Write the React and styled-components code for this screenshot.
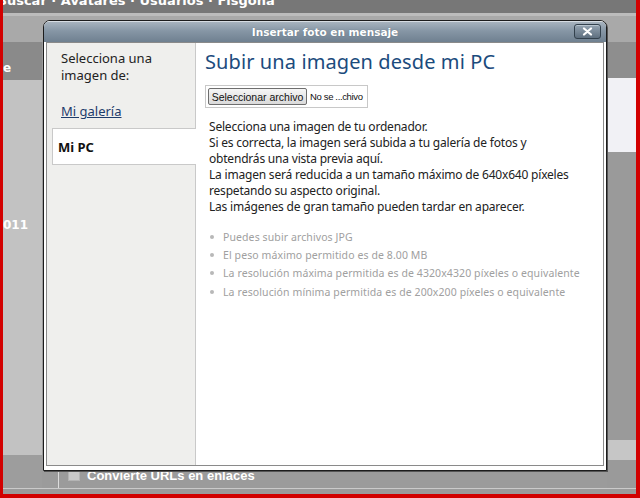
import React from "react";
import styled, { createGlobalStyle } from "styled-components";

const Global = createGlobalStyle`
  html, body { margin: 0; padding: 0; width: 640px; height: 498px; overflow: hidden; }
  * { box-sizing: border-box; }
`;

const Frame = styled.div`
  position: relative;
  width: 640px;
  height: 498px;
  border-left: 3px solid #d20000;
  border-right: 4px solid #d20000;
  border-bottom: 4px solid #d20000;
  background: #9b9b9b;
  display: flex;
  flex-direction: column;
  overflow: hidden;
  font-family: "Noto Sans", "DejaVu Sans", sans-serif;
`;

const TopNav = styled.div`
  height: 13px;
  background: #777;
  color: #fff;
  font: bold 13px "DejaVu Sans", sans-serif;
  line-height: 13px;
  overflow: hidden;
  white-space: nowrap;
  span { display: block; margin-top: -6px; margin-left: -6px; }
`;

const Band = styled.div`
  height: ${(p) => p.$h}px;
  background: ${(p) => p.$bg};
`;

const Content = styled.div`
  display: grid;
  grid-template-columns: 39px 1fr 29px;
  height: 446px;
`;

const Column = styled.div`
  display: flex;
  flex-direction: column;
`;

const Block = styled.div`
  height: ${(p) => (p.$h ? `${p.$h}px` : "auto")};
  flex: ${(p) => (p.$h ? "none" : "1")};
  background: ${(p) => p.$bg};
  color: #fff;
  font: bold 12px "DejaVu Sans", sans-serif;
  padding-top: ${(p) => p.$pt || 0}px;
  overflow: hidden;
  white-space: nowrap;
`;

const Spacer = styled.div`
  flex: 1;
`;

const OptionRow = styled.div`
  height: 33px;
  margin-left: 16px;
  border-left: 1px solid #dcdcdc;
  display: flex;
  align-items: flex-start;
  gap: 7px;
  padding: 13px 0 0 9px;
  color: #fff;
  font: bold 13px "Liberation Sans", sans-serif;
`;

const FakeCheck = styled.span`
  width: 12px;
  height: 12px;
  background: #c8c8c8;
  border: 1px solid #b4b4b4;
  margin-top: 1px;
`;

const BottomLine = styled.div`
  height: 1px;
  background: #cacaca;
`;

/* Modal */
const Modal = styled.div`
  position: absolute;
  left: 40px;
  top: 20px;
  width: 564px;
  height: 451px;
  border: 1px solid #1c1c1c;
  border-radius: 7px 7px 0 0;
  background: #fff;
  display: flex;
  flex-direction: column;
  overflow: hidden;
  box-shadow: 1px 1px 0 #555;
`;

const TitleBar = styled.div`
  position: relative;
  height: 21px;
  flex: none;
  background: linear-gradient(#a7b3be 0%, #8696a5 45%, #6f8090 100%);
  border-top: 1px solid #d7dde3;
  color: #fff;
  font: bold 10.5px "DejaVu Sans", sans-serif;
  display: flex;
  align-items: center;
  justify-content: center;
  text-shadow: 0 0 1px #5a6a78;
`;

const CloseButton = styled.button`
  position: absolute;
  right: 5px;
  top: 2px;
  width: 27px;
  height: 15px;
  padding: 0;
  border: 1px solid #33414d;
  border-radius: 3px;
  background: linear-gradient(#95a4b2, #5e6f7f);
  box-shadow: inset 0 1px 0 #b8c4ce;
  display: flex;
  align-items: center;
  justify-content: center;
`;

const BodyWrap = styled.div`
  flex: 1;
  padding: 0 2px 4px 2px;
  display: flex;
`;

const Body = styled.div`
  flex: 1;
  border: 1px solid #8a8a8a;
  display: flex;
`;

const Sidebar = styled.div`
  width: 149px;
  flex: none;
  background: #efefed;
  border-right: 1px solid #c9c9c9;
  padding-top: 7px;
  display: flex;
  flex-direction: column;
`;

const SideTitle = styled.div`
  padding-left: 14px;
  font-size: 13px;
  line-height: 17px;
  color: #222;
`;

const SideLink = styled.a`
  margin: 19px 0 0 14px;
  font-size: 13px;
  line-height: 17px;
  color: #1e3c6c;
  text-decoration: underline;
  cursor: pointer;
`;

const Tab = styled.div`
  margin: 8px -1px 0 5px;
  height: 37px;
  background: #fff;
  border: 1px solid #c9c9c9;
  border-right: none;
  display: flex;
  align-items: center;
  padding-left: 5px;
  font-size: 13px;
  font-weight: bold;
  color: #111;
`;

const Main = styled.div`
  flex: 1;
  background: #fff;
  padding: 7px 0 0 9px;
`;

const Heading = styled.h1`
  margin: 0;
  font-size: 20px;
  line-height: 24px;
  font-weight: normal;
  color: #1b4b7d;
  letter-spacing: 0.1px;
`;

const FileBox = styled.div`
  margin-top: 11px;
  width: 163px;
  height: 23px;
  border: 1px solid #c8c8c8;
  display: flex;
  align-items: center;
  gap: 3px;
  padding-left: 2px;
  font: 9.5px "Liberation Sans", sans-serif;
  letter-spacing: -0.35px;
  color: #111;
  white-space: nowrap;
`;

const FileButton = styled.button`
  flex: none;
  width: 99px;
  height: 17px;
  padding: 0;
  border: 1px solid #6e6e6e;
  border-radius: 2px;
  background: linear-gradient(#f6f6f6, #dadada);
  font: 10.5px "Liberation Sans", sans-serif;
  letter-spacing: 0;
  color: #111;
  line-height: 14px;
  white-space: nowrap;
`;

const Paragraph = styled.p`
  margin: 11px 0 0 4px;
  font-size: 12px;
  line-height: 16px;
  letter-spacing: -0.2px;
  color: #222;
`;

const Rules = styled.ul`
  margin: 13px 0 0 5px;
  padding: 0;
  list-style: none;
`;

const Rule = styled.li`
  display: flex;
  align-items: center;
  gap: 9px;
  height: 18.2px;
  font-size: 10.5px;
  letter-spacing: 0.1px;
  color: #a0a0a0;
  &::before {
    content: "";
    width: 4px;
    height: 4px;
    border-radius: 50%;
    background: #b8b8b8;
  }
`;

const rules = [
  "Puedes subir archivos JPG",
  "El peso máximo permitido es de 8.00 MB",
  "La resolución máxima permitida es de 4320x4320 píxeles o equivalente",
  "La resolución mínima permitida es de 200x200 píxeles o equivalente",
];

export default function App() {
  return (
    <>
      <Global />
      <Frame>
        <TopNav>
          <span>Buscar · Avatares · Usuarios · Fisgona</span>
        </TopNav>
        <Band $h={3} $bg="#bcbcbc" />
        <Band $h={26} $bg="#a9a9a9" />
        <Content>
          <Column>
            <Block $h={38} $bg="#8a8a8a" $pt={19}>e</Block>
            <Block $h={375} $bg="#c2c2c2" $pt={138}>011</Block>
            <Block $bg="#9d9d9d" />
          </Column>
          <Column>
            <Spacer />
            <OptionRow>
              <FakeCheck />
              Convierte URLs en enlaces
            </OptionRow>
          </Column>
          <Column>
            <Block $h={36} $bg="#8e8e8e" />
            <Block $h={74} $bg="#f1f1f5" />
            <Block $h={288} $bg="#9a9a9a" />
            <Block $h={20} $bg="#c6c6c6" />
            <Block $bg="#9a9a9a" />
          </Column>
        </Content>
        <BottomLine />

        <Modal>
          <TitleBar>
            Insertar foto en mensaje
            <CloseButton aria-label="Cerrar">
              <svg width="11" height="9" viewBox="0 0 11 9">
                <path d="M2 1.5 L9 7.5 M9 1.5 L2 7.5" stroke="#fff" strokeWidth="2.2" strokeLinecap="round" />
              </svg>
            </CloseButton>
          </TitleBar>
          <BodyWrap>
            <Body>
              <Sidebar>
                <SideTitle>
                  Selecciona una
                  <br />
                  imagen de:
                </SideTitle>
                <SideLink>Mi galería</SideLink>
                <Tab>Mi PC</Tab>
              </Sidebar>
              <Main>
                <Heading>Subir una imagen desde mi PC</Heading>
                <FileBox>
                  <FileButton>Seleccionar archivo</FileButton>
                  No se ...chivo
                </FileBox>
                <Paragraph>
                  Selecciona una imagen de tu ordenador.
                  <br />
                  Si es correcta, la imagen será subida a tu galería de fotos y
                  <br />
                  obtendrás una vista previa aquí.
                  <br />
                  La imagen será reducida a un tamaño máximo de 640x640 píxeles
                  <br />
                  respetando su aspecto original.
                  <br />
                  Las imágenes de gran tamaño pueden tardar en aparecer.
                </Paragraph>
                <Rules>
                  {rules.map((r) => (
                    <Rule key={r}>{r}</Rule>
                  ))}
                </Rules>
              </Main>
            </Body>
          </BodyWrap>
        </Modal>
      </Frame>
    </>
  );
}
